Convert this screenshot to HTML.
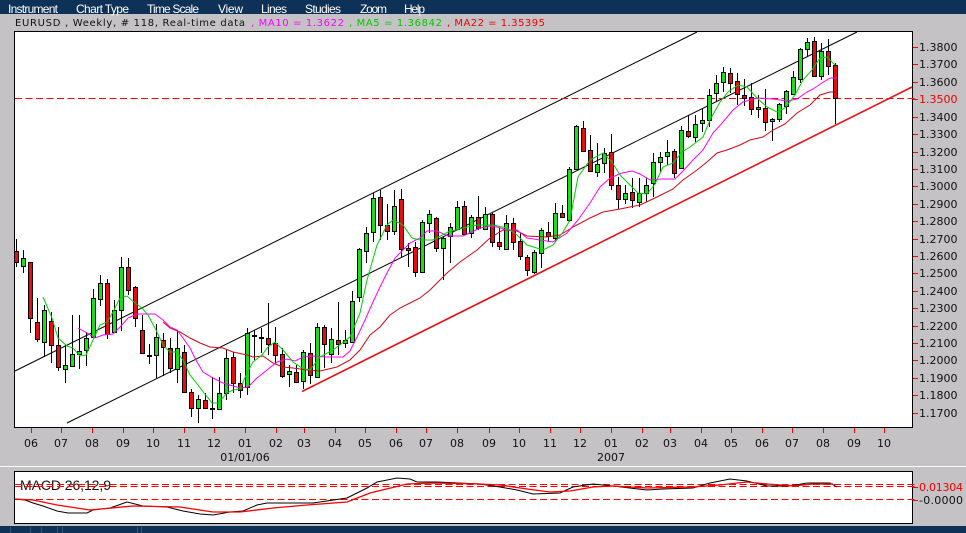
<!DOCTYPE html>
<html lang="en"><head><meta charset="utf-8"><title>EURUSD Weekly</title>
<style>html,body{margin:0;padding:0;background:#c4c2c4;width:966px;height:533px;overflow:hidden}svg{display:block}
.m{font:12px "Liberation Sans",sans-serif;fill:#fff}
.h{font:10px "DejaVu Sans",sans-serif}
.a{font:11px "DejaVu Sans",sans-serif;fill:#111}
.t{font:11px "DejaVu Sans",sans-serif;fill:#111;text-anchor:middle}
</style></head><body>
<svg xmlns="http://www.w3.org/2000/svg" width="966" height="533" viewBox="0 0 966 533">
<rect width="966" height="533" fill="#c4c2c4"/>
<rect width="966" height="14" fill="#0e3157"/>
<text class="m" x="8" y="13" textLength="50">Instrument</text>
<text class="m" x="76" y="13" textLength="53">Chart Type</text>
<text class="m" x="147" y="13" textLength="52">Time Scale</text>
<text class="m" x="218" y="13" textLength="25">View</text>
<text class="m" x="261" y="13" textLength="26">Lines</text>
<text class="m" x="305" y="13" textLength="36">Studies</text>
<text class="m" x="360" y="13" textLength="27">Zoom</text>
<text class="m" x="404" y="13" textLength="21">Help</text>
<text class="h" x="15" y="26" textLength="230" fill="#111">EURUSD , Weekly, # 118, Real-time data</text>
<text class="h" x="251" y="26" textLength="93" fill="#ff00ff">, MA10 = 1.3622</text>
<text class="h" x="349" y="26" textLength="93" fill="#00c800">, MA5 = 1.36842</text>
<text class="h" x="447" y="26" textLength="98" fill="#f00000">, MA22 = 1.35395</text>

<rect x="14.5" y="31.5" width="898" height="396" fill="#fff" stroke="#000"/>
<g fill="none">
<path d="M15 371L697 32M67 423L857 32" stroke="#000" stroke-width="1"/>
<path d="M15 98.5H918" stroke="#f00" stroke-width="1" stroke-dasharray="7 3.5"/>
<path d="M302 391.5L912 87" stroke="#e8101a" stroke-width="1.6"/>
<path stroke="#000" d="M16.5 239V267M23.5 250V273M30.5 262V333M37.5 298V342M44.5 305V357M51.5 312V363M58.5 327V371M65.5 345V383M72.5 315V367M79.5 315V369M86.5 332V366M93.5 289V338M100.5 275V306M107.5 279V339M114.5 300V333M121.5 257V331M128.5 258V295M135.5 286V327M142.5 315V354M149.5 344V364M156.5 324V378M163.5 333V376M170.5 338V373M177.5 330V383M184.5 345V393M191.5 389V417M198.5 395V423M205.5 393V409M212.5 377V419M219.5 377V409M226.5 350V400M233.5 352V393M240.5 373V398M247.5 328V395M254.5 330V360M261.5 328V353M268.5 303V355M275.5 327V363M282.5 348V378M289.5 365V387M296.5 365V383M303.5 350V389M310.5 343V384M317.5 323V377M324.5 325V368M331.5 328V363M338.5 302V355M345.5 330V348M352.5 291V342M359.5 248V302M366.5 227V263M373.5 193V242M380.5 190V240M387.5 204V240M394.5 190V235M401.5 189V258M408.5 243V267M415.5 242V277M422.5 220V272M429.5 210V233M436.5 217V252M443.5 237V280M450.5 223V263M457.5 201V230M464.5 201V235M471.5 215V238M478.5 196V230M485.5 207V230M492.5 212V247M499.5 228V250M506.5 215V250M513.5 218V250M520.5 233V260M527.5 255V276M534.5 250V274M541.5 228V268M548.5 222V242M555.5 203V242M562.5 205V217M569.5 167V222M576.5 125V170M583.5 121V152M590.5 135V172M597.5 143V177M604.5 148V173M611.5 134V190M618.5 177V209M625.5 185V204M632.5 178V208M639.5 178V207M646.5 178V202M653.5 153V197M660.5 152V172M667.5 140V165M674.5 149V178M681.5 126V168M688.5 115V138M695.5 115V142M702.5 109V132M709.5 89V127M716.5 75V102M723.5 67V92M730.5 68V93M737.5 73V105M744.5 79V106M751.5 83V115M758.5 95V118M765.5 89V131M772.5 118V141M779.5 103V122M786.5 90V114M793.5 71V95M800.5 48V83M807.5 38V57M814.5 37V77M821.5 43V80M828.5 39V75M835.5 63V124"/>
<path stroke="#000" fill="#e80c10" d="M14.5 251.5h4v11h-4zM28.5 262.5h4v56h-4zM35.5 322.5h4v17h-4zM49.5 321.5h4v24h-4zM56.5 345.5h4v22h-4zM105.5 283.5h4v51h-4zM126.5 267.5h4v23h-4zM133.5 287.5h4v31h-4zM140.5 330.5h4v23h-4zM147.5 355.5h4v1h-4zM161.5 340.5h4v7h-4zM168.5 348.5h4v20h-4zM182.5 352.5h4v40h-4zM189.5 392.5h4v16h-4zM203.5 400.5h4v8h-4zM210.5 408.5h4v1h-4zM231.5 357.5h4v26h-4zM238.5 383.5h4v7h-4zM252.5 335.5h4v1h-4zM259.5 337.5h4v1h-4zM266.5 338.5h4v6h-4zM273.5 343.5h4v12h-4zM280.5 354.5h4v22h-4zM294.5 372.5h4v10h-4zM308.5 353.5h4v22h-4zM322.5 327.5h4v17h-4zM336.5 340.5h4v4h-4zM378.5 197.5h4v28h-4zM385.5 225.5h4v6h-4zM399.5 199.5h4v50h-4zM406.5 248.5h4v2h-4zM413.5 247.5h4v25h-4zM434.5 218.5h4v30h-4zM462.5 206.5h4v28h-4zM476.5 217.5h4v11h-4zM490.5 214.5h4v28h-4zM497.5 242.5h4v4h-4zM511.5 223.5h4v19h-4zM518.5 241.5h4v15h-4zM525.5 257.5h4v13h-4zM546.5 232.5h4v4h-4zM560.5 213.5h4v4h-4zM581.5 128.5h4v23h-4zM588.5 150.5h4v21h-4zM609.5 152.5h4v33h-4zM616.5 185.5h4v14h-4zM630.5 192.5h4v8h-4zM672.5 151.5h4v22h-4zM686.5 131.5h4v5h-4zM728.5 73.5h4v10h-4zM735.5 81.5h4v13h-4zM742.5 95.5h4v3h-4zM749.5 97.5h4v12h-4zM763.5 108.5h4v14h-4zM812.5 41.5h4v35h-4zM826.5 51.5h4v15h-4zM833.5 65.5h4v33h-4z"/>
<path stroke="#000" fill="#18e018" d="M21.5 258.5h4v8h-4zM42.5 310.5h4v32h-4zM63.5 365.5h4v4h-4zM70.5 354.5h4v12h-4zM77.5 351.5h4v3h-4zM84.5 338.5h4v12h-4zM91.5 298.5h4v39h-4zM98.5 283.5h4v16h-4zM112.5 310.5h4v22h-4zM119.5 267.5h4v43h-4zM154.5 337.5h4v18h-4zM175.5 348.5h4v21h-4zM196.5 399.5h4v9h-4zM217.5 393.5h4v16h-4zM224.5 358.5h4v35h-4zM245.5 333.5h4v54h-4zM287.5 371.5h4v3h-4zM301.5 352.5h4v29h-4zM315.5 327.5h4v50h-4zM329.5 339.5h4v15h-4zM343.5 340.5h4v3h-4zM350.5 301.5h4v41h-4zM357.5 249.5h4v48h-4zM364.5 233.5h4v18h-4zM371.5 198.5h4v34h-4zM392.5 206.5h4v25h-4zM420.5 222.5h4v50h-4zM427.5 214.5h4v9h-4zM441.5 238.5h4v10h-4zM448.5 227.5h4v9h-4zM455.5 207.5h4v22h-4zM469.5 217.5h4v16h-4zM483.5 214.5h4v15h-4zM504.5 223.5h4v26h-4zM532.5 252.5h4v20h-4zM539.5 230.5h4v23h-4zM553.5 213.5h4v25h-4zM567.5 169.5h4v51h-4zM574.5 126.5h4v43h-4zM595.5 164.5h4v8h-4zM602.5 153.5h4v10h-4zM623.5 193.5h4v6h-4zM637.5 193.5h4v9h-4zM644.5 185.5h4v8h-4zM651.5 162.5h4v21h-4zM658.5 157.5h4v5h-4zM665.5 152.5h4v4h-4zM679.5 130.5h4v38h-4zM693.5 124.5h4v13h-4zM700.5 120.5h4v3h-4zM707.5 95.5h4v25h-4zM714.5 83.5h4v10h-4zM721.5 72.5h4v10h-4zM756.5 107.5h4v2h-4zM770.5 119.5h4v2h-4zM777.5 104.5h4v15h-4zM784.5 91.5h4v15h-4zM791.5 77.5h4v17h-4zM798.5 49.5h4v30h-4zM805.5 42.5h4v7h-4zM819.5 51.5h4v25h-4z"/>
<polyline stroke="#c80a18" points="163,322 170,328 180,332 190,338 200,343 210,347 223,348 233,352 247,355 253,357 263,356 273,363 283,367 293,368 307,370 320,371 337,367 350,360 360,350 370,335 380,327 390,315 400,308 410,303 420,298 430,290 447,273 460,262 477,250 490,238 503,230 517,231 527,236 547,237 560,235 573,227 590,218 603,212 620,209 640,205 657,197 673,189 683,180 697,170 707,162 717,153 727,150 740,145 750,140 763,137 773,130 785,124 797,113 810,105 820,95 830,92 836,92"/>
<polyline stroke="#ff00ff" points="78,328 87,333 95,338 103,335 113,334 120,327 128,318 137,314 147,314 155,314 163,320 170,327 177,330 183,338 190,348 197,362 203,372 213,378 223,383 233,386 240,388 248,387 257,378 267,370 277,362 287,359 295,361 303,357 313,356 327,357 343,357 350,351 357,337 365,320 373,302 380,287 387,273 395,258 403,250 410,243 420,238 427,231 437,231 448,236 463,236 478,229 487,226 497,227 507,230 517,230 527,238 540,240 553,242 567,233 578,220 590,203 600,187 610,178 622,173 632,171 640,174 650,180 662,179 675,179 682,172 693,160 703,150 713,133 723,122 733,110 743,102 757,98 773,99 787,101 797,99 807,92 813,89 822,83 830,78 837,78"/>
<polyline stroke="#00d000" points="43,297 52,318 58,338 67,346 73,348 80,356 86,355 93,340 100,325 107,322 113,312 120,298 127,296 135,303 142,308 148,315 156,330 163,345 170,352 177,352 183,360 190,375 198,385 204,393 212,403 218,403 227,393 233,390 240,389 247,373 253,362 262,355 268,347 275,342 283,350 293,362 302,368 310,370 320,357 333,350 350,337 360,313 367,280 377,245 387,225 393,220 403,225 412,238 420,240 433,240 448,232 463,228 477,225 493,225 507,228 517,235 527,245 543,250 553,245 563,232 570,220 578,177 590,160 603,153 612,162 620,175 630,185 638,193 647,194 655,184 663,167 673,163 682,152 690,147 703,137 710,120 720,102 728,92 738,85 747,87 757,98 767,107 777,112 785,108 795,95 803,80 812,70 820,58 827,57 835,65"/>
</g>

<g stroke="#f00" stroke-width="1" fill="none">
<path d="M913 47.5h5M913 64.5h5M913 82.5h5M913 99.5h5M913 117.5h5M913 134.5h5M913 152.5h5M913 169.5h5M913 186.5h5M913 204.5h5M913 221.5h5M913 239.5h5M913 256.5h5M913 273.5h5M913 291.5h5M913 308.5h5M913 326.5h5M913 343.5h5M913 360.5h5M913 378.5h5M913 395.5h5M913 413.5h5"/>
<path d="M31.5 428v5M61.5 428v5M92.5 428v5M123.5 428v5M153.5 428v5M184.5 428v5M214.5 428v5M245.5 428v5M276.5 428v5M304.5 428v5M335.5 428v5M365.5 428v5M396.5 428v5M426.5 428v5M457.5 428v5M489.5 428v5M519.5 428v5M550.5 428v5M580.5 428v5M611.5 428v5M642.5 428v5M670.5 428v5M701.5 428v5M731.5 428v5M762.5 428v5M792.5 428v5M823.5 428v5M854.5 428v5M884.5 428v5"/>
</g>
<g>
<text class="a" x="919" y="51">1.3800</text><text class="a" x="919" y="68">1.3700</text><text class="a" x="919" y="86">1.3600</text><text class="a" x="919" y="103" style="fill:#f00000">1.3500</text><text class="a" x="919" y="121">1.3400</text><text class="a" x="919" y="138">1.3300</text><text class="a" x="919" y="156">1.3200</text><text class="a" x="919" y="173">1.3100</text><text class="a" x="919" y="190">1.3000</text><text class="a" x="919" y="208">1.2900</text><text class="a" x="919" y="225">1.2800</text><text class="a" x="919" y="243">1.2700</text><text class="a" x="919" y="260">1.2600</text><text class="a" x="919" y="277">1.2500</text><text class="a" x="919" y="295">1.2400</text><text class="a" x="919" y="312">1.2300</text><text class="a" x="919" y="330">1.2200</text><text class="a" x="919" y="347">1.2100</text><text class="a" x="919" y="364">1.2000</text><text class="a" x="919" y="382">1.1900</text><text class="a" x="919" y="399">1.1800</text><text class="a" x="919" y="417">1.1700</text>
</g>
<g>
<text class="t" x="31" y="447">06</text><text class="t" x="61" y="447">07</text><text class="t" x="92" y="447">08</text><text class="t" x="123" y="447">09</text><text class="t" x="153" y="447">10</text><text class="t" x="184" y="447">11</text><text class="t" x="214" y="447">12</text><text class="t" x="245" y="447">01</text><text class="t" x="276" y="447">02</text><text class="t" x="304" y="447">03</text><text class="t" x="335" y="447">04</text><text class="t" x="365" y="447">05</text><text class="t" x="396" y="447">06</text><text class="t" x="426" y="447">07</text><text class="t" x="457" y="447">08</text><text class="t" x="489" y="447">09</text><text class="t" x="519" y="447">10</text><text class="t" x="550" y="447">11</text><text class="t" x="580" y="447">12</text><text class="t" x="611" y="447">01</text><text class="t" x="642" y="447">02</text><text class="t" x="670" y="447">03</text><text class="t" x="701" y="447">04</text><text class="t" x="731" y="447">05</text><text class="t" x="762" y="447">06</text><text class="t" x="792" y="447">07</text><text class="t" x="823" y="447">08</text><text class="t" x="854" y="447">09</text><text class="t" x="884" y="447">10</text>
<text class="t" x="245" y="461">01/01/06</text><text class="t" x="611" y="461">2007</text>
</g>

<rect x="0" y="466" width="966" height="1" fill="#fff"/>
<rect x="14.5" y="471.5" width="898" height="52" fill="#fff" stroke="#000"/>
<text x="20" y="490" font-family="Liberation Sans, sans-serif" font-size="14" fill="#111" textLength="91">MACD 26,12,9</text>
<path d="M15 484.5H918M15 486.5H918M15 499.5H918" stroke="#f00" fill="none" stroke-dasharray="7 3.5"/>
<g fill="none">
<polyline stroke="#000" points="15,499 25,500 33,503 43,506 57,511 68,513 87,513 93,510 110,508 127,502 143,506 167,507 183,511 200,514 213,515 230,512 243,511 257,505 267,503 293,503 313,503 347,498 367,488 377,482 397,478 410,479 417,482 437,482 480,484 500,487 517,490 533,494 560,493 573,487 593,484 613,486 647,490 663,489 693,488 710,483 730,479 747,481 767,486 790,486 807,483 830,483 837,487"/>
<polyline stroke="#f00" stroke-width="1.3" points="15,499 33,500 57,505 90,510 133,506 180,507 213,512 240,512 273,508 307,505 347,502 370,493 407,484 433,483 480,484 500,485 527,489 550,492 570,491 593,487 613,486 647,488 693,487 720,485 747,482 767,484 793,486 813,484 833,484"/>
</g>
<path d="M913 487.5h5M913 500.5h5" stroke="#f00"/>
<text class="a" x="919" y="491" style="fill:#f00000" textLength="44">0.01304</text>
<text class="a" x="919" y="504" textLength="44">-0.0000</text>

<rect x="0" y="526" width="966" height="7" fill="#0e3157"/>
<path d="M10.5 527V533M30.5 527V533M41.5 527V533M57.5 527V533M62.5 527V533M137.5 527V533M141.5 527V533" stroke="#3a5f88" opacity=".8"/>
</svg>
</body></html>
